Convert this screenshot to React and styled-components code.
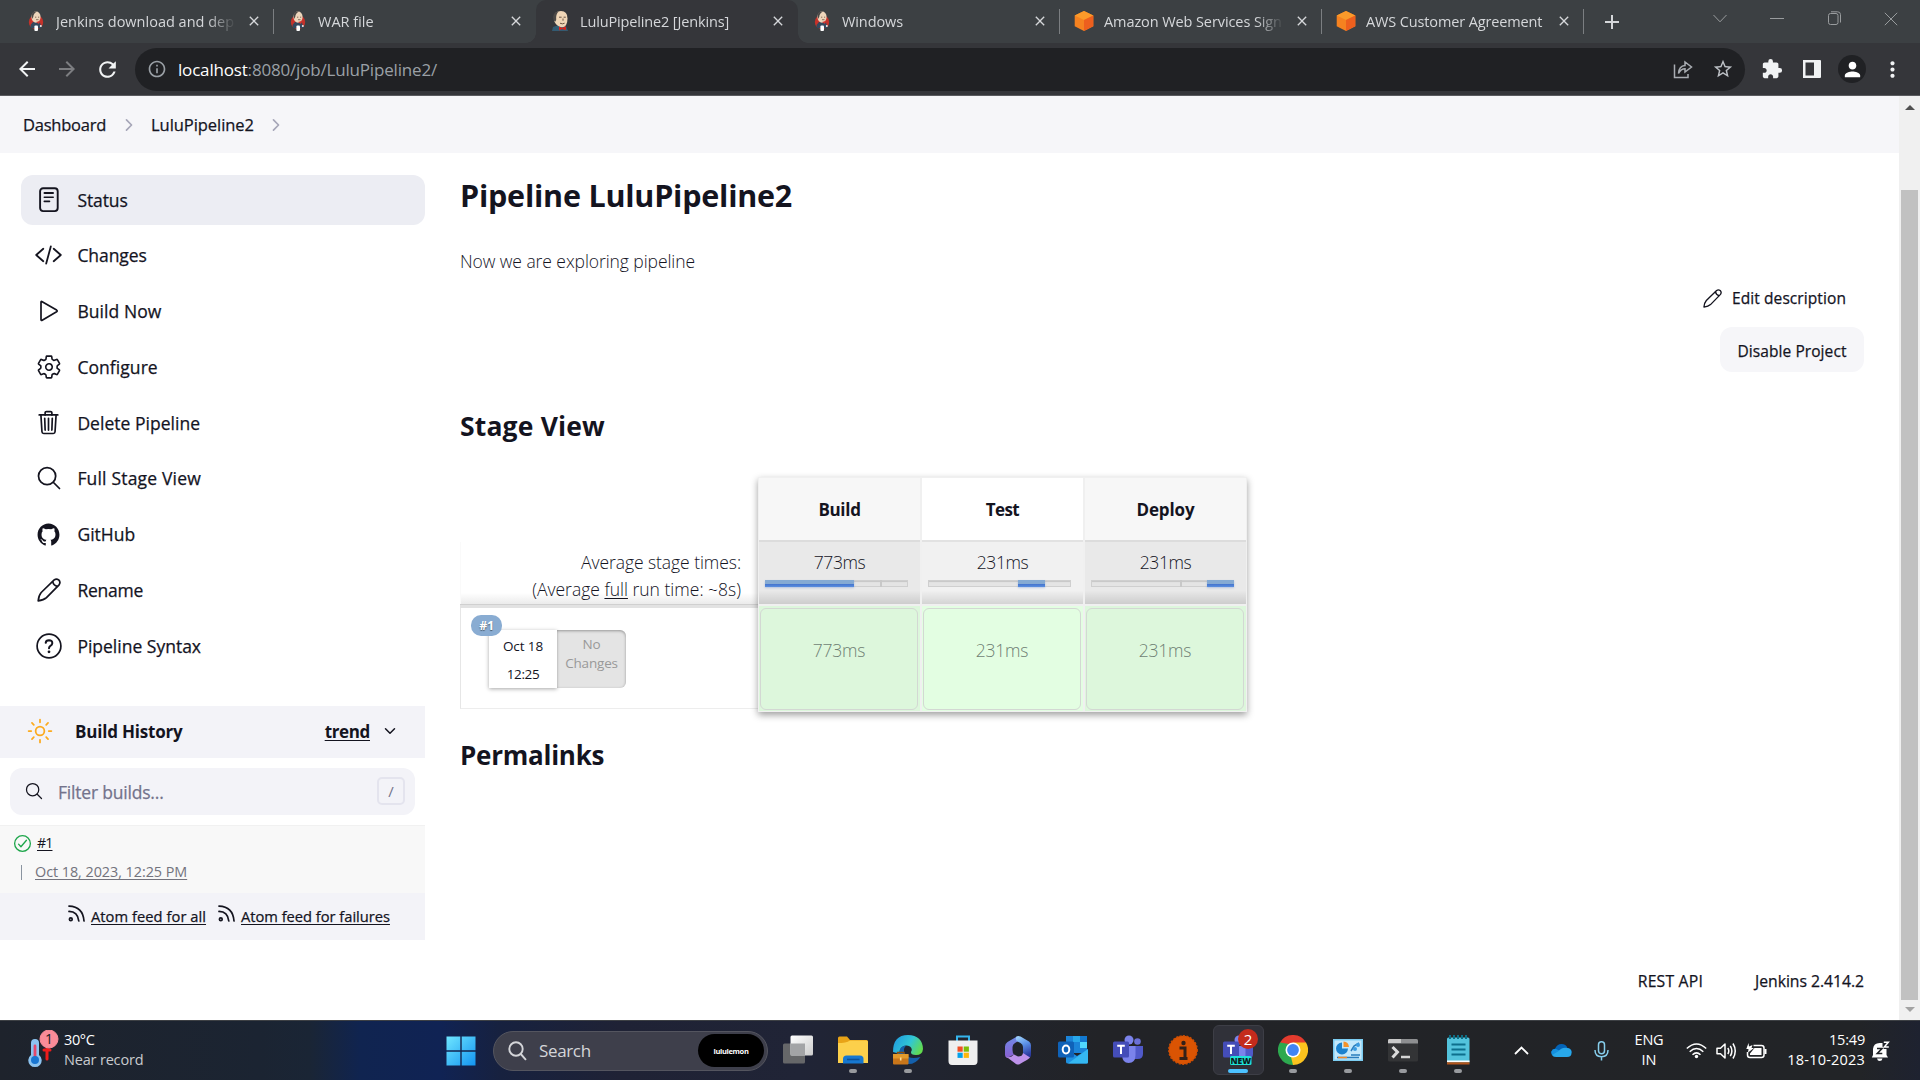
import React from "react";
import styled, { createGlobalStyle, css } from "styled-components";
import { IoSettingsOutline, IoTrashOutline, IoSearchOutline, IoLogoGithub, IoSunnyOutline, IoChevronForward, IoChevronDown, IoCheckmarkCircleOutline } from "react-icons/io5";
import { MdArrowBack, MdArrowForward, MdRefresh, MdInfoOutline, MdStarOutline, MdExtension, MdMoreVert, MdPerson, MdAdd, MdClose } from "react-icons/md";

const Global = createGlobalStyle`
  * { box-sizing: border-box; }
  html, body { margin: 0; height: 100%; overflow: hidden; background: #fff; }
  body { font-family: "Open Sans", "Noto Sans", sans-serif; color: #14141f; font-size: 17.5px; }
  svg { display: block; flex: none; }
`;

const Screen = styled.div`
  width: 1920px;
  height: 1080px;
  display: flex;
  flex-direction: column;
  overflow: hidden;
`;

const Label = styled.span`
  display: inline-block;
  white-space: nowrap;
  font-size: ${(p) => p.$size || 17.5}px;
  font-weight: ${(p) => p.$weight || 400};
  letter-spacing: ${(p) => p.$track || 0}px;
  color: ${(p) => p.$color || "inherit"};
  text-decoration: ${(p) => (p.$underline ? "underline" : "none")};
  text-decoration-thickness: 1px;
  text-underline-offset: 2px;
  ${(p) => p.$firm && css`-webkit-text-stroke: 0.25px currentColor;`}
`;

/* ---------- Browser chrome ---------- */

const TabStrip = styled.div`
  height: 43px;
  flex: none;
  display: flex;
  background: #3c4043;
  padding-left: 12px;
  color: #d5d7da;
`;

const Tab = styled.div`
  width: 262px;
  height: 43px;
  display: flex;
  align-items: center;
  padding: 0 12px 1px 14px;
  position: relative;
  background: ${(p) => (p.$active ? "#35363a" : "transparent")};
  border-radius: ${(p) => (p.$active ? "10px 10px 0 0" : "0")};
  ${(p) => p.$active && css`
    &::before, &::after {
      content: "";
      position: absolute;
      bottom: 0;
      width: 10px;
      height: 10px;
    }
    &::before {
      left: -10px;
      background: radial-gradient(circle at 0 0, transparent 9.5px, #35363a 10px);
    }
    &::after {
      right: -10px;
      background: radial-gradient(circle at 100% 0, transparent 9.5px, #35363a 10px);
    }
  `}
  ${(p) => p.$divider && css`
    &::after {
      content: "";
      position: absolute;
      right: 0;
      top: 9px;
      width: 1px;
      height: 25px;
      background: #7b7e81;
    }
  `}
`;

const TabTitle = styled.div`
  flex: 1;
  height: 24px;
  line-height: 22px;
  margin-left: 10px;
  margin-right: 10px;
  overflow: hidden;
  white-space: nowrap;
  -webkit-mask-image: linear-gradient(90deg, #000 ${(p) => (p.$fade ? "84%" : "100%")}, transparent);
`;

const NewTab = styled.div`
  width: 56px;
  display: flex;
  align-items: center;
  justify-content: center;
`;

const WindowControls = styled.div`
  margin-left: auto;
  display: flex;
  height: 37px;
  color: #999c9e;
`;

const WindowButton = styled.div`
  width: 57.2px;
  display: flex;
  align-items: center;
  justify-content: center;
`;

const Toolbar = styled.div`
  height: 53px;
  flex: none;
  background: #35363a;
  border-bottom: 1px solid #5a5b5f;
  display: flex;
  align-items: center;
  padding: 0 8px 0 7px;
  color: #f1f3f4;
`;

const NavButton = styled.div`
  width: 40px;
  height: 40px;
  display: flex;
  align-items: center;
  justify-content: center;
  color: ${(p) => (p.$dim ? "#7d7e81" : "#f1f3f4")};
`;

const Omnibox = styled.div`
  width: 1610px;
  height: 43px;
  margin-left: 8px;
  margin-right: 7px;
  background: #202124;
  border-radius: 22px;
  display: flex;
  align-items: center;
  padding: 0 2px 0 12px;
  color: #9aa0a6;
`;

const Url = styled.div`
  flex: 1;
  margin-left: 11px;
`;

const Avatar = styled.div`
  width: 28px;
  height: 28px;
  border-radius: 50%;
  background: #202124;
  color: #fff;
  display: flex;
  align-items: center;
  justify-content: center;
`;

/* ---------- Page ---------- */

const Viewport = styled.div`
  flex: 1;
  min-height: 0;
  display: flex;
`;

const Page = styled.div`
  width: 1899px;
  display: flex;
  flex-direction: column;
`;

const Scrollbar = styled.div`
  width: 21px;
  background: #f0f0f0;
  display: flex;
  flex-direction: column;
  align-items: center;
  padding: 9px 0 8px;
`;

const Thumb = styled.div`
  width: 17px;
  height: 810px;
  margin-top: 80px;
  margin-bottom: 7px;
  background: #c1c1c1;
`;

const ScrollArrow = styled.div`
  border-left: 5px solid transparent;
  border-right: 5px solid transparent;
  ${(p) => (p.$down ? "border-top: 5px solid #a3a3a3;" : "border-bottom: 5px solid #505050;")}
`;

const Breadcrumbs = styled.div`
  height: 57px;
  flex: none;
  background: #f6f6f9;
  display: flex;
  align-items: center;
  padding-left: 23px;
  color: #14141f;
  svg { color: #a6a6b8; }
`;

const Crumb = styled.div`
  display: flex;
  align-items: center;
  width: ${(p) => p.$width}px;
  justify-content: space-between;
  margin-right: 13px;
`;

const Body = styled.div`
  flex: 1;
  display: flex;
`;

const Side = styled.aside`
  width: 425px;
  padding-top: 22px;
`;

const Tasks = styled.nav`
  display: flex;
  flex-direction: column;
  gap: 5.8px;
  padding-left: 21px;
  margin-bottom: 34.6px;
`;

const Task = styled.div`
  height: 50px;
  border-radius: 12px;
  background: ${(p) => (p.$active ? "#ecedf3" : "transparent")};
  display: flex;
  align-items: center;
  padding-left: 12.8px;
  padding-bottom: 1px;
`;

const TaskIcon = styled.div`
  width: 30px;
  height: 30px;
  margin-right: 13.6px;
  display: flex;
  align-items: center;
  justify-content: center;
`;

const HistoryHead = styled.div`
  height: 52px;
  background: #f3f3f8;
  display: flex;
  align-items: center;
  padding: 0 27px 1px 26px;
`;

const HistoryTitle = styled.div`
  flex: 1;
  margin-left: 21px;
`;

const Trend = styled.div`
  display: flex;
  align-items: center;
  gap: 12px;
`;

const Filter = styled.div`
  height: 47px;
  margin: 10px 10px 10px;
  border-radius: 12px;
  background: #f3f3f8;
  display: flex;
  align-items: center;
  padding: 0 10px 0 14px;
`;

const FilterText = styled.div`
  flex: 1;
  margin-left: 14px;
  padding-top: 1px;
  color: #73738c;
`;

const Key = styled.div`
  width: 28px;
  height: 28px;
  border: 2px solid #e4e4ee;
  border-radius: 5px;
  display: flex;
  align-items: center;
  justify-content: center;
  color: #73738c;
`;

const BuildRow = styled.div`
  height: 68px;
  background: #f8f8f8;
  border-top: 1px solid #f1f1f1;
  padding: 3px 0 0 12px;
`;

const BuildLine = styled.div`
  display: flex;
  align-items: center;
  height: 29px;
  gap: ${(p) => p.$gap || 0}px;
  ${Label} { margin-bottom: 2px; }
`;

const Tick = styled.div`
  width: 1px;
  height: 15px;
  background: #8a94a0;
  margin: 0 13px 0 9px;
`;

const Feeds = styled.div`
  height: 47px;
  background: #f3f3f8;
  display: flex;
  align-items: center;
  padding-left: 68px;
`;

const Feed = styled.div`
  display: flex;
  align-items: center;
  width: ${(p) => p.$width}px;
  svg { margin: 0 6px 5px 0; }
`;

const Main = styled.main`
  flex: 1;
  display: flex;
  flex-direction: column;
  padding: 22px 35px 0 35px;
`;

const Heading = styled.div`
  height: ${(p) => p.$height}px;
  line-height: ${(p) => p.$height}px;
  margin-top: ${(p) => p.$top || 0}px;
`;

const Description = styled.div`
  height: 24px;
  line-height: 24px;
  margin-top: 34px;
`;

const Actions = styled.div`
  display: flex;
  flex-direction: column;
  align-items: flex-end;
  margin-top: 13px;
`;

const EditLink = styled.div`
  height: 24px;
  display: flex;
  align-items: center;
  gap: 10px;
  padding-right: 18px;
`;

const DisableButton = styled.div`
  width: 144px;
  height: 45px;
  margin-top: 17px;
  padding-top: 2px;
  border-radius: 12px;
  background: #f6f6f9;
  display: flex;
  align-items: center;
  justify-content: center;
`;

const StageView = styled.div`
  display: flex;
  margin-top: 33px;
  height: 235px;
`;

const RunColumn = styled.div`
  width: 298px;
  display: flex;
  flex-direction: column;
  padding-top: 65px;
`;

const Averages = styled.div`
  height: 62px;
  padding: 7px 17px 0 0;
  text-align: right;
  line-height: 27px;
  background: linear-gradient(180deg, rgba(255,255,255,0) 82%, #ebebeb);
  border-left: 1px solid #fafafa;
`;

const Divider = styled.div`
  height: 4px;
  background: #e2e2e2;
  border-top: 1px solid #d0d0d0;
`;

const RunCell = styled.div`
  height: 101px;
  border-left: 1px solid #e6e6e6;
  border-bottom: 1px solid #ededed;
  padding: 7px 0 0 10px;
`;

const RunBadge = styled.div`
  position: relative;
  z-index: 1;
  width: 31px;
  height: 21px;
  border-radius: 10px;
  background: #89acd2;
  color: #fff;
  text-shadow: 0 1px 1px #456;
  display: flex;
  align-items: center;
  justify-content: center;
`;

const RunCard = styled.div`
  display: flex;
  height: 58px;
  width: 137px;
  margin: -6px 0 0 18px;
`;

const RunDate = styled.div`
  width: 68px;
  background: #fff;
  box-shadow: 0 1px 4px rgba(0, 0, 0, 0.35);
  display: flex;
  flex-direction: column;
  align-items: center;
  line-height: 28px;
  padding-top: 2px;
`;

const RunChanges = styled.div`
  flex: 1;
  background: #e4e4e4;
  border-radius: 0 6px 6px 0;
  box-shadow: inset 0 1px 3px rgba(0, 0, 0, 0.35);
  color: #999;
  display: flex;
  flex-direction: column;
  align-items: center;
  line-height: 19px;
  padding-top: 5px;
`;

const StageTable = styled.div`
  width: 489px;
  border: 1px solid #f0f0f0;
  box-shadow: 0 3px 7px rgba(0, 0, 0, 0.38);
  display: grid;
  grid-template-columns: repeat(3, 1fr);
  background: #f0f0f0;
  column-gap: 2px;
`;

const Stage = styled.div`
  display: flex;
  flex-direction: column;
`;

const StageName = styled.div`
  height: 62px;
  display: flex;
  align-items: center;
  justify-content: center;
  background: ${(p) => (p.$odd ? "#f7f7f7" : "#ffffff")};
`;

const StageAverage = styled.div`
  height: 64px;
  padding: 9px 12px 0 6px;
  border-top: 2px solid ${(p) => (p.$odd ? "#dcdcdc" : "#e2e2e2")};
  background: linear-gradient(180deg, transparent 78%, rgba(0, 0, 0, 0.12)), ${(p) => (p.$odd ? "#e9e9e9" : "#f1f1f1")};
  display: flex;
  flex-direction: column;
`;

const AverageText = styled.div`
  height: 24px;
  line-height: 22px;
  text-align: center;
  padding-left: 6px;
`;

const Meter = styled.div`
  display: flex;
  height: 7px;
  width: 143px;
  margin-top: 5px;
  background: #e4e4e4;
  box-shadow: inset 0 0 0 1px #cfcfcf, inset 0 2px 1px #c6c6c6;
`;

const MeterGap = styled.div`
  flex: ${(p) => p.$size} 0 0;
  border-right: ${(p) => (p.$mark ? "2px solid #c8c8c8" : "0")};
`;

const MeterFill = styled.div`
  flex: ${(p) => p.$size} 0 0;
  height: 7px;
  background: linear-gradient(180deg, #85aad3 0 58%, #4676cf 62%, #5b8fe0);
  box-shadow: 0 1px 2px rgba(60, 110, 200, 0.3);
`;

const StageCell = styled.div`
  flex: 1;
  margin-top: 2px;
  padding: 2px 2px 1px 1px;
  background: ${(p) => (p.$odd ? "#ddf7dc" : "#e3fee2")};
`;

const StageCellInner = styled.div`
  height: 100%;
  border: 1px solid #d3d8d3;
  border-radius: 6px;
  display: flex;
  justify-content: center;
  padding-top: 28px;
  line-height: 26px;
`;

const Footer = styled.div`
  margin-top: auto;
  height: 51px;
  display: flex;
  justify-content: flex-end;
  gap: 52px;
  line-height: 24px;
`;

/* ---------- Taskbar ---------- */

const Taskbar = styled.div`
  height: 60px;
  flex: none;
  display: flex;
  align-items: center;
  border-top: 1px solid #3d4044;
  color: #fff;
  background: linear-gradient(90deg, #1e232c 0, #1b2432 260px, #1a2535 310px, #102450 360px, #102354 440px, #17213f 500px, #1f2235 620px, #202436 800px, #21242c 1000px, #222327 1100px, #222427 1860px, #1e2230 1920px);
`;

const Weather = styled.div`
  width: 418px;
  display: flex;
  padding-left: 27px;
`;

const WeatherText = styled.div`
  margin-left: 3px;
  padding-bottom: 2px;
  line-height: 20px;
  display: flex;
  flex-direction: column;
  align-items: flex-start;
`;

const StartButton = styled.div`
  width: 75px;
  display: flex;
  justify-content: center;
  padding-left: 11px;
`;

const SearchBox = styled.div`
  width: 275px;
  height: 40px;
  border-radius: 20px;
  border: 1px solid #54555f;
  background: #3e3f4b;
  display: flex;
  align-items: center;
  padding: 0 3px 0 14px;
  gap: 12px;
  color: #d4d5d9;
`;

const Brand = styled.div`
  margin-left: auto;
  width: 66px;
  height: 33px;
  border-radius: 17px;
  background: #000;
  color: #fff;
  display: flex;
  align-items: center;
  justify-content: center;
`;

const Apps = styled.div`
  display: flex;
  margin-left: 2.5px;
`;

const AppSlot = styled.div`
  width: 55px;
  height: 59px;
  padding: 4px 2px;
`;

const AppTile = styled.div`
  height: 50px;
  width: 51px;
  border-radius: 6px;
  display: flex;
  flex-direction: column;
  align-items: center;
  padding-top: 9px;
  background: ${(p) => (p.$active ? "#303139" : "transparent")};
  border: 1px solid ${(p) => (p.$active ? "#3d3e46" : "transparent")};
  &::after {
    content: "";
    margin-top: 4px;
    width: ${(p) => (p.$active ? 20 : 8)}px;
    height: 4px;
    border-radius: 2px;
    background: ${(p) => (p.$active ? "#4cc2ff" : p.$open ? "#989a9e" : "transparent")};
  }
`;

const Badged = styled.div`
  position: relative;
`;

const CountBadge = styled.div`
  position: absolute;
  top: -6px;
  right: -5px;
  width: 20px;
  height: 20px;
  border-radius: 50%;
  background: #c42b1c;
  display: flex;
  align-items: center;
  justify-content: center;
`;

const Tray = styled.div`
  margin-left: auto;
  display: flex;
  align-items: center;
  padding-right: 25px;
`;

const TrayItem = styled.div`
  width: ${(p) => p.$width}px;
  display: flex;
  justify-content: center;
`;

const TwoLines = styled.div`
  width: ${(p) => p.$width}px;
  padding-bottom: 2px;
  display: flex;
  flex-direction: column;
  align-items: ${(p) => p.$align};
  line-height: 20px;
`;

/* ---------- Drawings ---------- */

const JenkinsLogo = () => (
  <svg width="20" height="20" viewBox="0 0 20 20">
    <ellipse cx="10" cy="11" rx="7.2" ry="7" fill="#c6322a" />
    <path d="M4.5 14 L7 11 L14 11.5 L15.5 17 H5 Z" fill="#34495e" />
    <ellipse cx="10" cy="6" rx="4.6" ry="5.8" fill="#edd5bb" />
    <path d="M5.6 3.5 Q7 0 11 .4 Q7.5 2 7.2 6 L6 8 Z" fill="#4b4846" />
    <path d="M10 11 L14 10 L13 13 Z" fill="#d33833" />
    <rect x="8.4" y="14.5" width="3.6" height="5.5" rx="1" fill="#fff" />
    <circle cx="14.8" cy="15" r="1" fill="#eee" />
    <path d="M9 6.2 h1.3 M12 6.2 h1.2 M10 8.7 h2.5" stroke="#6d5846" strokeWidth=".8" />
  </svg>
);

const JenkinsHead = () => (
  <svg width="20" height="20" viewBox="0 0 20 20">
    <path d="M2 20 L3 16 L9 14 L16 15 L18 20 Z" fill="#335b72" />
    <path d="M4 7 Q4 0 11 0 Q17.5 0 17.5 7.5 Q17.5 16 12 16.3 Q7 16 4 10 Z" fill="#f0d6b7" />
    <path d="M3.6 9 Q1.5 1.5 9 .2 Q5.5 3 6.2 9 L5 11 Z" fill="#4b4846" />
    <path d="M9 6.2 h2.6 M13.6 6.2 h2.2 M10 12.2 q2.5 1.3 4.6 0 M13 7.5 v2.2" stroke="#5b4636" strokeWidth=".9" fill="none" />
    <path d="M9 15.5 L12 17 L16 15.3 L16 19.3 L12 18 L9 19.5 Z" fill="#d8241c" />
  </svg>
);

const AwsCube = () => (
  <svg width="20" height="20" viewBox="0 0 20 20">
    <path d="M10 0 L19.3 4.6 V15.2 L10 20 L.7 15.2 V4.6 Z" fill="#f58220" />
    <path d="M10 0 L19.3 4.6 L10 9 L.7 4.6 Z" fill="#fb9a2a" />
    <path d="M19.3 4.6 L10 9 V20 L19.3 15.2 Z" fill="#ed5f1e" />
  </svg>
);

const Chevron = () => (
  <svg width="16" height="10" viewBox="0 0 16 10"><path d="M1.5 1 L8 7.8 L14.5 1" fill="none" stroke="currentColor" strokeWidth="1" /></svg>
);
const Minimise = () => (
  <svg width="14" height="1" viewBox="0 0 14 1"><path d="M0 .5 H14" stroke="currentColor" /></svg>
);
const Restore = () => (
  <svg width="15" height="15" viewBox="0 0 15 15" fill="none" stroke="currentColor"><rect x="1.5" y="2.500" width="9.500" height="11" rx="2" /><path d="M4 .8 H10.500 Q13.500 .8 13.500 3.600 V11.500" /></svg>
);
const CloseWindow = () => (
  <svg width="14" height="14" viewBox="0 0 14 14"><path d="M.8.8 L13.2 13.2 M13.2.8 L.8 13.2" stroke="currentColor" /></svg>
);
const Share = () => (
  <svg width="20" height="20" viewBox="0 0 20 20" fill="none" stroke="#a9adb2" strokeWidth="1.5"><path d="M1.5 5.5 V18.5 H15 V15" /><path d="M5.5 14.5 Q6 7 12 6.5 V3 L18.5 8 L12 13 V9.8 Q8 9.8 5.5 14.5 Z" /></svg>
);
const SidePanel = () => (
  <svg width="20" height="18" viewBox="0 0 20 18"><path fillRule="evenodd" d="M1 0 H18 Q19 0 19 1 V17 Q19 18 18 18 H1 Z M3.5 2.5 V15.5 H12 V2.5 Z" fill="#f1f3f4" /></svg>
);

const StatusIcon = () => (
  <svg width="20" height="26" viewBox="0 0 20 26" fill="none" stroke="currentColor" strokeLinecap="round">
    <rect x="1.1" y="1.3" width="17.6" height="22.8" rx="3" strokeWidth="1.9" />
    <path d="M5.5 6 H14" strokeWidth="2" /><path d="M5.3 10.3 H14.2 M5.3 14.4 H10.5" strokeWidth="1.6" />
  </svg>
);
const CodeIcon = () => (
  <svg width="27" height="20" viewBox="0 0 27 20" fill="none" stroke="currentColor" strokeWidth="1.8" strokeLinecap="round" strokeLinejoin="round"><path d="M8.3 3.8 L1.2 10 L8.3 16.2 M18.7 3.8 L25.8 10 L18.7 16.2 M15.8 1.4 L11.2 18.6" /></svg>
);
const PlayIcon = () => (
  <svg width="20" height="22" viewBox="0 0 20 22" fill="none" stroke="currentColor" strokeWidth="1.7" strokeLinejoin="round"><path d="M2 2.4 Q2 1 3.2 1.7 L17.6 10.1 Q18.8 11 17.6 11.8 L3.2 20.2 Q2 20.9 2 19.5 Z" /></svg>
);
const PencilIcon = ({ size = 24 }) => (
  <svg width={size} height={size} viewBox="0 0 24 24" fill="none" stroke="currentColor" strokeWidth="1.7" strokeLinejoin="round">
    <path d="M1.2 22.8 Q1.8 17.2 4.2 14.5 L17.2 1.9 Q19.4 .2 21.7 1.9 Q23.9 4.2 22.1 6.8 L9.5 19.7 Q6.8 22.2 1.2 22.8 Z" />
    <path d="M15.7 3.4 Q16.4 7.6 20.5 8.4" />
  </svg>
);
const HelpIcon = () => (
  <svg width="26" height="26" viewBox="0 0 26 26" fill="none" stroke="currentColor" strokeWidth="1.7" strokeLinecap="round">
    <circle cx="13" cy="13" r="11.9" /><path d="M9.7 9.8 Q9.9 7.3 13 7.3 Q16.4 7.4 16.3 10.2 Q16.2 11.8 14.4 12.8 Q13 13.6 13 15.3" strokeWidth="2" /><circle cx="13" cy="18.8" r=".7" fill="currentColor" strokeWidth="1.4" />
  </svg>
);
const FeedIcon = () => (
  <svg width="17" height="17" viewBox="0 0 17 17" fill="none" stroke="currentColor" strokeWidth="1.7" strokeLinecap="round"><circle cx="2.8" cy="14.2" r="1.4" /><path d="M1 6.4 Q9.8 6.6 10.8 16 M1 1.1 Q15 1.6 16 16" /></svg>
);

const Thermometer = () => (
  <svg width="34" height="40" viewBox="0 0 34 40">
    <path d="M4 13 a4 4 0 0 1 8 0 V25 a6.7 6.7 0 1 1 -8 0 Z" fill="#8cc3ef" />
    <path d="M6.6 16 a1.4 1.4 0 0 1 2.8 0 V28 h-2.8 Z" fill="#e5476a" /><circle cx="8" cy="30" r="4" fill="#1976d2" />
    <path d="M17 20 H23 M20 19 V29" stroke="#ee1c1c" strokeWidth="3" strokeLinecap="round" />
    <circle cx="22" cy="9" r="9" fill="#f98b98" stroke="#f98b98" />
    <text x="22" y="14" fontSize="14" textAnchor="middle" fill="#161b22" fontFamily="Open Sans, sans-serif">1</text>
  </svg>
);
const WindowsLogo = () => (
  <svg width="30" height="30" viewBox="0 0 30 30">
    <defs><linearGradient id="win" x1="0" y1="0" x2="1" y2="1" gradientUnits="objectBoundingBox"><stop offset="0" stopColor="#6fe6ff" /><stop offset="1" stopColor="#1394f0" /></linearGradient></defs>
    <path d="M.5.5 H14.3 V14.3 H.5 Z M15.7.5 H29.5 V14.3 H15.7 Z M.5 15.7 H14.3 V29.5 H.5 Z M15.7 15.7 H29.5 V29.5 H15.7 Z" fill="url(#win)" />
  </svg>
);
const AppIcon = ({ children }) => <svg width="30" height="30" viewBox="0 0 30 30">{children}</svg>;
const TaskViewIcon = () => (
  <AppIcon><defs><linearGradient id="tv" x1="0" y1="0" x2="1" y2="1"><stop offset="0" stopColor="#fff" /><stop offset="1" stopColor="#ccc" /></linearGradient></defs>
    <rect x="0" y="8.5" width="22" height="20" rx="1.5" fill="#666769" /><rect x="7.5" y=".5" width="22.5" height="20" rx="1.5" fill="url(#tv)" /><path d="M7.5 8.5 H22 V20.5 H7.5 Z" fill="#a3a4a6" /></AppIcon>
);
const ExplorerIcon = () => (
  <AppIcon><path d="M0 3 Q0 1.5 1.5 1.5 H9 L12 5 H28.5 Q30 5 30 6.5 V28 H0 Z" fill="#e8a317" /><path d="M0 8 Q8 8 12 5.4 H28.5 Q30 5.4 30 7 V28 H0 Z" fill="#fcd04b" /><path d="M5 28.5 V24 Q5 20.5 8.5 20.5 H22 Q25.5 20.5 25.5 24 V28.5 Z" fill="#1778d0" /><path d="M9 24.5 H21.5" stroke="#0b5199" strokeWidth="1.6" /></AppIcon>
);
const EdgeIcon = () => (
  <AppIcon><defs><linearGradient id="edge" x1="0" x2="1" y1=".2" y2=".6"><stop offset="0" stopColor="#1f9be0" /><stop offset=".55" stopColor="#31c6d6" /><stop offset="1" stopColor="#62dc4e" /></linearGradient></defs>
    <path d="M0 17 Q0 0 15 0 Q29.5 .5 30 14 Q29.5 20 23 20 Q17.5 20 18 17 Q20 14 17 11.5 Q12 9 8 13 Q6 16 7 19 Z" fill="url(#edge)" />
    <path d="M6 19 Q6 11 13 10.5 Q9.5 14.5 12 19 Q16 25 27.5 22 Q22 30 14 29 Q8 28 6 19" fill="#1460ac" />
    <rect x="0" y="19" width="15.5" height="10.5" rx="1" fill="#c9761a" /><path d="M0 19 H15.5 V23.5 H0 Z" fill="#e39a2b" /><path d="M4.5 19 V17.5 H11 V19" stroke="#8a4d0d" fill="none" strokeWidth="1.4" /><path d="M7.7 22.5 v3" stroke="#fce09a" strokeWidth="1.6" /></AppIcon>
);
const StoreIcon = () => (
  <AppIcon><path d="M9 6 V1.5 H21 V6" stroke="#35b5ee" strokeWidth="2" fill="none" /><path d="M.5 5.5 H29.5 V26 Q29.5 30 26 30 H4 Q.5 30 .5 26 Z" fill="#efefef" /><path d="M9.5 11.5 h5.2 v5.2 h-5.2 Z" fill="#f04e24" /><path d="M15.7 11.5 h5.2 v5.2 h-5.2 Z" fill="#7ebc06" /><path d="M9.5 17.7 h5.2 v5.2 h-5.2 Z" fill="#04a1ea" /><path d="M15.7 17.7 h5.2 v5.2 h-5.2 Z" fill="#fdb70c" /></AppIcon>
);
const M365Icon = () => (
  <AppIcon><defs><linearGradient id="m1" x1="0" y1="0" x2="0" y2="1"><stop offset="0" stopColor="#6f8be8" /><stop offset="1" stopColor="#8a5fd0" /></linearGradient><linearGradient id="m2" x1="0" y1="0" x2=".3" y2="1"><stop offset="0" stopColor="#a9dcff" /><stop offset=".5" stopColor="#5a90e6" /><stop offset="1" stopColor="#2c3aa0" /></linearGradient></defs>
    <path d="M14 1.500 L4.500 7 Q2 8.500 2 11.500 V20 Q2 22 4 23 L11 19.500 Q9.500 18 9.500 15 V12 Q9.500 9.500 12 8 L17 5 Z" fill="url(#m1)" />
    <path d="M13.500 1.500 Q15 .3 17.500 1.500 L26 6.500 Q28 8 28 10.500 V20 Q28 22.500 25.500 23.500 L20 20 V12 Q20 9.500 17.500 8 L14.500 6.500 Q11.500 4.500 13.500 1.500" fill="url(#m2)" />
    <path d="M3 21.500 Q7.500 23.500 11 19.500 Q13 20.700 15 21.500 Q19.500 21.500 20 18 L27 22.500 Q26 24 16.500 29.200 Q15 30 13 28.900 Z" fill="#bd92ea" /></AppIcon>
);
const OutlookIcon = () => (
  <AppIcon><rect x="8" y="1" width="21" height="17" fill="#1b84d8" /><path d="M15 1 h7 v6 h-7 Z" fill="#28a8ea" /><path d="M22 7 h7 v6 h-7 Z" fill="#50d9ff" /><path d="M22 1 h7 v6 h-7 Z" fill="#1279d0" /><path d="M8 14 L19 21 L30 14 V27 Q30 28.500 28.500 28.500 H10 Q8 28.500 8 27 Z" fill="#1e90e0" /><path d="M30 14 L10 28.500 H28.500 Q30 28.500 30 27 Z" fill="#35b8f1" /><rect x="0" y="6.500" width="16" height="16" rx="1.500" fill="#0f62b8" /><ellipse cx="8" cy="14.500" rx="3.300" ry="3.900" fill="none" stroke="#fff" strokeWidth="2" /></AppIcon>
);
const TeamsIcon = ({ fresh }) => (
  <AppIcon><circle cx="24.500" cy="6.500" r="3.300" fill="#6b70d6" /><circle cx="16" cy="5" r="4.500" fill="#7b83eb" /><path d="M19 11 H30 V19 Q30 24 24.500 24 H20 Z" fill="#5059c9" /><path d="M9 11 H22.500 V20 Q22.500 28 15.500 28 Q9.500 28 9 20 Z" fill="#7b83eb" /><rect x="0" y="6.500" width="16" height="16" rx="1.500" fill="#444db8" /><path d="M4.200 10.700 H11.800 M8 10.700 V19" stroke="#fff" strokeWidth="2" />
    {fresh && <><rect x="7" y="21" width="21.500" height="9" rx="1.500" fill="#1fe0d8" /><text x="17.700" y="28.800" textAnchor="middle" fontSize="8.500" fontWeight="800" fill="#0b1b1b" fontFamily="Open Sans, sans-serif">NEW</text></>}
  </AppIcon>
);
const NoticeIcon = () => (
  <AppIcon><circle cx="15" cy="15" r="14.200" fill="#da5403" stroke="#c94d04" strokeDasharray="2 1.500" strokeWidth="1.500" /><circle cx="15.500" cy="8" r="2.200" fill="#332018" /><path d="M11.500 13 H17 V23 M11.500 23.500 H19.500" stroke="#332018" strokeWidth="3" fill="none" /></AppIcon>
);
const ChromeIcon = () => (
  <AppIcon><path d="M15 15 L2 7.500 A15 15 0 0 1 28 7.500 Z" fill="#e33b2e" /><path d="M15 15 L28 7.500 A15 15 0 0 1 15 30 Z" fill="#fcc31e" /><path d="M15 15 L15 30 A15 15 0 0 1 2 7.500 Z" fill="#2da94f" /><path d="M15 7.500 H28 L21.500 18.700 Z" fill="#fcc31e" /><path d="M8.500 18.700 L2 7.500 L11 9 Z" fill="#2da94f" /><path d="M21.500 18.700 L15 30 L13 22 Z" fill="#fcc31e" /><circle cx="15" cy="15" r="7.500" fill="#fff" /><circle cx="15" cy="15" r="5.900" fill="#4285f4" /></AppIcon>
);
const PanelIcon = () => (
  <AppIcon><rect x="0" y="4" width="30" height="22" fill="#7ccdf2" /><rect x="1.500" y="5.500" width="27" height="19" fill="#c3e8fb" /><path d="M9 7.500 A6 6 0 1 0 15 13.500 H9 Z" fill="#1b82cf" /><path d="M10.500 6.500 A6 6 0 0 1 16 12 H10.500 Z" fill="#f3922b" /><path d="M18 16 L21 11 L26 8 M18 20 H27 M4 22.500 H26" stroke="#2a7dbd" strokeWidth="1.500" fill="none" /><circle cx="25" cy="10" r="2" fill="#3b9be0" /><circle cx="22" cy="14" r="2" fill="#3b9be0" /><path d="M5 22.500 H14" stroke="#ef8a2b" strokeWidth="1.500" /></AppIcon>
);
const TerminalIcon = () => (
  <AppIcon><rect x="0" y="4" width="30" height="22.500" rx="1.500" fill="#333436" /><path d="M0 8.500 V5.500 Q0 4 1.500 4 H28.500 Q30 4 30 5.500 V8.500 Z" fill="#8e8f91" /><path d="M0 8 V5.500 Q0 4 1.500 4 H13 V8 Z" fill="#c8c8c8" /><path d="M4.500 12 L9.500 17 L4.500 22.500" fill="none" stroke="#dadada" strokeWidth="3" /><path d="M13 22 H22" stroke="#d5d5d5" strokeWidth="2.500" /></AppIcon>
);
const NotepadIcon = () => (
  <AppIcon><rect x="4" y="2.500" width="22.500" height="26" rx="1.500" fill="#53c3dc" /><path d="M4 25.500 H26.500 V27 H4 Z" fill="#fff" /><path d="M4 27.200 H26.500 V29.500 H4 Z" fill="#b5561c" /><path d="M7 0 V4 M11 0 V4 M15 0 V4 M19 0 V4 M23 0 V4" stroke="#0d6d84" strokeWidth="2" /><path d="M8.500 9.500 H22.500 M8.500 14.500 H22.500 M8.500 19.500 H22.500" stroke="#0d6f8c" strokeWidth="2" /></AppIcon>
);
const CaretUp = () => (
  <svg width="15" height="9" viewBox="0 0 15 9"><path d="M1 8 L7.500 1.500 L14 8" fill="none" stroke="#fff" strokeWidth="1.800" /></svg>
);
const OneDrive = () => (
  <svg width="21" height="15" viewBox="0 0 21 15"><path d="M4 13 Q0 12 .4 8.500 Q1 6 4 5.700 Q6 1 10.500 1 Q15 1 16.500 5 Q20.600 5.500 20.600 9.500 L12 12 Z" fill="#0364b8" /><path d="M3 13.500 Q-.3 12 .4 8.500 Q1.500 5.500 5 5.900 L14 10 Z" fill="#1490df" /><path d="M7 8.500 Q11 3.500 16.500 5 Q20.600 5.500 20.600 9.500 Q20.600 14 16 14 H5 Q2 14 1.200 12 Z" fill="#28a8ea" /></svg>
);
const Mic = () => (
  <svg width="15" height="20" viewBox="0 0 15 20" fill="none" stroke="#86cdeb" strokeWidth="1.500"><rect x="4.500" y=".8" width="6" height="12" rx="3" /><path d="M1 9 Q1 15.700 7.500 15.700 Q14 15.700 14 9 M7.500 15.700 V19.500" /></svg>
);
const Wifi = () => (
  <svg width="21" height="16" viewBox="0 0 21 16" fill="none" stroke="#fff" strokeWidth="1.500"><path d="M.8 5.500 Q10.500 -3.500 20.200 5.500 M3.700 8.700 Q10.500 2.300 17.300 8.700 M6.500 11.700 Q10.500 8 14.500 11.700" /><circle cx="10.500" cy="13.500" r="1.700" fill="#fff" stroke="none" /></svg>
);
const Speaker = () => (
  <svg width="21" height="18" viewBox="0 0 21 18" fill="none" stroke="#fff" strokeWidth="1.500" strokeLinejoin="round"><path d="M1 6.200 H4.500 L9 2 V16 L4.500 11.800 H1 Z M11.800 6 Q13.800 9 11.800 12 M14.300 3.800 Q17.500 9 14.300 14.200 M17 1.500 Q21.500 9 17 16.500" /></svg>
);
const Battery = () => (
  <svg width="21" height="18" viewBox="0 0 21 18"><path d="M7.500 3.500 H15.500 Q18 3.500 18 6 V13 Q18 15.500 15.500 15.500 H4 Q1.500 15.500 1.500 13 V10" fill="none" stroke="#fff" strokeWidth="1.500" /><path d="M18.500 7 h2 v5 h-2 Z M8.500 6 H15.500 V13 H4 V11.500 Z" fill="#fff" /><path d="M2.500 1 L3 4.500 L6.500 3 L5.500 6 H8 L2 10.500 L2.500 7 H.3 Z" fill="#fff" /></svg>
);
const Bell = () => (
  <svg width="19" height="20" viewBox="0 0 19 20"><path d="M2 14 V8 Q2.500 2 8.700 2 H11.500 V5.500 L13 8 H15.500 V14 L17 16.500 H.8 Z M6 17.500 H11.500 Q11 20 8.700 20 Q6.500 20 6 17.500" fill="#fff" /><path d="M6 7.500 H11 L6.300 12.500 H11.300" stroke="#202226" strokeWidth="1.600" fill="none" /><path d="M12.800 1.200 H17.300 L13.300 6 H17.800" stroke="#fff" strokeWidth="1.500" fill="none" /></svg>
);
const Magnifier = () => (
  <svg width="19" height="20" viewBox="0 0 19 20" fill="none" stroke="currentColor" strokeWidth="1.900" strokeLinecap="round"><circle cx="8" cy="8" r="6.700" /><path d="M12.800 13 L17.500 18.300" /></svg>
);

/* ---------- Data ---------- */

const tabs = [
  { title: "Jenkins download and dep", icon: JenkinsLogo, fade: true, divider: true, track: 0 },
  { title: "WAR file", icon: JenkinsLogo, track: 0 },
  { title: "LuluPipeline2 [Jenkins]", icon: JenkinsHead, active: true, track: -0.14 },
  { title: "Windows", icon: JenkinsLogo, divider: true, track: -0.1 },
  { title: "Amazon Web Services Sign", icon: AwsCube, fade: true, divider: true, track: -0.09 },
  { title: "AWS Customer Agreement", icon: AwsCube, divider: true, track: -0.13 },
];

const tasks = [
  { text: "Status", icon: <StatusIcon />, active: true, track: -0.1 },
  { text: "Changes", icon: <CodeIcon />, track: -0.06 },
  { text: "Build Now", icon: <PlayIcon />, track: 0.08 },
  { text: "Configure", icon: <IoSettingsOutline size={26} />, track: 0.06 },
  { text: "Delete Pipeline", icon: <IoTrashOutline size={27} />, track: 0.03 },
  { text: "Full Stage View", icon: <IoSearchOutline size={28} />, track: 0.18 },
  { text: "GitHub", icon: <IoLogoGithub size={25} />, track: 0.02 },
  { text: "Rename", icon: <PencilIcon />, track: -0.25 },
  { text: "Pipeline Syntax", icon: <HelpIcon />, track: 0 },
];

const stages = [
  { name: "Build", time: "773ms", odd: true, bar: [["fill", 90], ["mark", 27], ["gap", 26]], track: -0.3 },
  { name: "Test", time: "231ms", odd: false, bar: [["gap", 90], ["fill", 27], ["gap", 26]], track: -0.6 },
  { name: "Deploy", time: "231ms", odd: true, bar: [["mark", 90], ["gap", 26], ["fill", 27]], track: -0.13 },
];

const apps = [
  { icon: <TaskViewIcon /> },
  { icon: <ExplorerIcon />, open: true },
  { icon: <EdgeIcon />, open: true },
  { icon: <StoreIcon /> },
  { icon: <M365Icon /> },
  { icon: <OutlookIcon /> },
  { icon: <TeamsIcon /> },
  { icon: <NoticeIcon /> },
  { icon: <TeamsIcon fresh />, active: true, badge: "2" },
  { icon: <ChromeIcon />, open: true },
  { icon: <PanelIcon />, open: true },
  { icon: <TerminalIcon />, open: true },
  { icon: <NotepadIcon />, open: true },
];

export default function App() {
  return (
    <Screen>
      <Global />
      <TabStrip>
        {tabs.map((t) => (
          <Tab key={t.title} $active={t.active} $divider={t.divider}>
            <t.icon />
            <TabTitle $fade={t.fade}><Label $size={14.5} $track={t.track}>{t.title}</Label></TabTitle>
            <MdClose size={16} />
          </Tab>
        ))}
        <NewTab><MdAdd size={24} /></NewTab>
        <WindowControls>
          <WindowButton><Chevron /></WindowButton>
          <WindowButton><Minimise /></WindowButton>
          <WindowButton><Restore /></WindowButton>
          <WindowButton><CloseWindow /></WindowButton>
        </WindowControls>
      </TabStrip>
      <Toolbar>
        <NavButton><MdArrowBack size={24} /></NavButton>
        <NavButton $dim><MdArrowForward size={24} /></NavButton>
        <NavButton><MdRefresh size={25} /></NavButton>
        <Omnibox>
          <MdInfoOutline size={20} />
          <Url>
            <Label $size={17} $track={-0.18}>
              <Label $size={17} $track={-0.18} $color="#fff">localhost</Label>:8080/job/LuluPipeline2/
            </Label>
          </Url>
          <NavButton><Share /></NavButton>
          <NavButton><MdStarOutline size={22} color="#bdc1c6" /></NavButton>
        </Omnibox>
        <NavButton><MdExtension size={22} /></NavButton>
        <NavButton><SidePanel /></NavButton>
        <NavButton><Avatar><MdPerson size={23} /></Avatar></NavButton>
        <NavButton><MdMoreVert size={25} /></NavButton>
      </Toolbar>
      <Viewport>
        <Page>
          <Breadcrumbs>
            <Crumb $width={115}><Label $size={16.5} $firm $track={-0.22}>Dashboard</Label><IoChevronForward size={18} /></Crumb>
            <Crumb $width={134}><Label $size={16.5} $firm $track={-0.05}>LuluPipeline2</Label><IoChevronForward size={18} /></Crumb>
          </Breadcrumbs>
          <Body>
            <Side>
              <Tasks>
                {tasks.map((t) => (
                  <Task key={t.text} $active={t.active}>
                    <TaskIcon>{t.icon}</TaskIcon>
                    <Label $firm $track={t.track}>{t.text}</Label>
                  </Task>
                ))}
              </Tasks>
              <HistoryHead>
                <IoSunnyOutline size={28} color="#fcaa1e" />
                <HistoryTitle><Label $size={17} $weight={700} $track={-0.2}>Build History</Label></HistoryTitle>
                <Trend><Label $size={17} $weight={700} $underline $track={-0.35}>trend</Label><IoChevronDown size={16} /></Trend>
              </HistoryHead>
              <Filter>
                <IoSearchOutline size={20} />
                <FilterText><Label $firm $track={-0.2}>Filter builds...</Label></FilterText>
                <Key><Label $size={15}>/</Label></Key>
              </Filter>
              <BuildRow>
                <BuildLine $gap={4}><IoCheckmarkCircleOutline size={21} color="#1ea64b" /><Label $size={14.2} $track={-0.9} $underline>#1</Label></BuildLine>
                <BuildLine><Tick /><Label $size={14.4} $track={-0.05} $underline $color="#73737d">Oct 18, 2023, 12:25 PM</Label></BuildLine>
              </BuildRow>
              <Feeds>
                <Feed $width={150}><FeedIcon /><Label $size={14.7} $firm $track={0.05} $underline>Atom feed for all</Label></Feed>
                <Feed $width={180}><FeedIcon /><Label $size={14.7} $firm $track={-0.02} $underline>Atom feed for failures</Label></Feed>
              </Feeds>
            </Side>
            <Main>
              <Heading $height={40}><Label $size={30.5} $weight={700} $track={-0.22}>Pipeline LuluPipeline2</Label></Heading>
              <Description><Label $weight={300} $track={-0.07}>Now we are exploring pipeline</Label></Description>
              <Actions>
                <EditLink><PencilIcon size={19} /><Label $size={15.5} $firm $track={0.09}>Edit description</Label></EditLink>
                <DisableButton><Label $size={15.5} $firm $track={0.08}>Disable Project</Label></DisableButton>
              </Actions>
              <Heading $height={36} $top={36}><Label $size={26.5} $weight={700} $track={0.17}>Stage View</Label></Heading>
              <StageView>
                <RunColumn>
                  <Averages>
                    <div><Label $weight={300} $track={-0.06}>Average stage times:</Label></div>
                    <div><Label $weight={300}>(Average <u>full</u> run time: ~8s)</Label></div>
                  </Averages>
                  <Divider />
                  <RunCell>
                    <RunBadge><Label $size={12.5} $weight={700} $track={-0.4}>#1</Label></RunBadge>
                    <RunCard>
                      <RunDate><Label $size={13.5} $track={-0.12}>Oct 18</Label><Label $size={13.5} $track={-0.4}>12:25</Label></RunDate>
                      <RunChanges><Label $size={13.5} $track={-0.1}>No</Label><Label $size={13.5} $track={-0.2}>Changes</Label></RunChanges>
                    </RunCard>
                  </RunCell>
                </RunColumn>
                <StageTable>
                  {stages.map((s) => (
                    <Stage key={s.name}>
                      <StageName $odd={s.odd}><Label $size={17} $weight={700} $track={s.track}>{s.name}</Label></StageName>
                      <StageAverage $odd={s.odd}>
                        <AverageText><Label $weight={300} $track={-0.4}>{s.time}</Label></AverageText>
                        <Meter>
                          {s.bar.map(([kind, size], i) => kind === "fill" ? <MeterFill key={i} $size={size} /> : <MeterGap key={i} $size={size} $mark={kind === "mark"} />)}
                        </Meter>
                      </StageAverage>
                      <StageCell $odd={s.odd}><StageCellInner><Label $weight={300} $track={-0.25} $color="#6f7f74">{s.time}</Label></StageCellInner></StageCell>
                    </Stage>
                  ))}
                </StageTable>
              </StageView>
              <Heading $height={36} $top={25}><Label $size={26} $weight={700} $track={-0.25}>Permalinks</Label></Heading>
              <Footer><Label $size={15.75} $firm $track={0.2}>REST API</Label><Label $size={15.75} $firm $track={-0.04}>Jenkins 2.414.2</Label></Footer>
            </Main>
          </Body>
        </Page>
        <Scrollbar><ScrollArrow /><Thumb /><ScrollArrow $down /></Scrollbar>
      </Viewport>
      <Taskbar>
        <Weather>
          <Thermometer />
          <WeatherText><Label $size={14.5} $track={-0.36}>30°C</Label><Label $size={14.5} $track={-0.18} $color="#c9cbce">Near record</Label></WeatherText>
        </Weather>
        <StartButton><WindowsLogo /></StartButton>
        <SearchBox><Magnifier /><Label $size={17} $track={-0.35}>Search</Label><Brand><Label $size={7.5} $weight={700} $track={-0.34}>lululemon</Label></Brand></SearchBox>
        <Apps>
          {apps.map((a, i) => (
            <AppSlot key={i}>
              <AppTile $active={a.active} $open={a.open}>
                <Badged>{a.icon}{a.badge && <CountBadge><Label $size={15}>{a.badge}</Label></CountBadge>}</Badged>
              </AppTile>
            </AppSlot>
          ))}
        </Apps>
        <Tray>
          <TrayItem $width={40}><CaretUp /></TrayItem>
          <TrayItem $width={40}><OneDrive /></TrayItem>
          <TrayItem $width={40}><Mic /></TrayItem>
          <TwoLines $width={56} $align="center"><Label $size={14.5} $track={-0.18}>ENG</Label><Label $size={14.5}>IN</Label></TwoLines>
          <TrayItem $width={38}><Wifi /></TrayItem>
          <TrayItem $width={22}><Speaker /></TrayItem>
          <TrayItem $width={38}><Battery /></TrayItem>
          <TwoLines $width={90} $align="flex-end"><Label $size={14.5} $track={-0.2}>15:49</Label><Label $size={14.5} $track={0.2}>18-10-2023</Label></TwoLines>
          <TrayItem $width={30}><Bell /></TrayItem>
        </Tray>
      </Taskbar>
    </Screen>
  );
}
